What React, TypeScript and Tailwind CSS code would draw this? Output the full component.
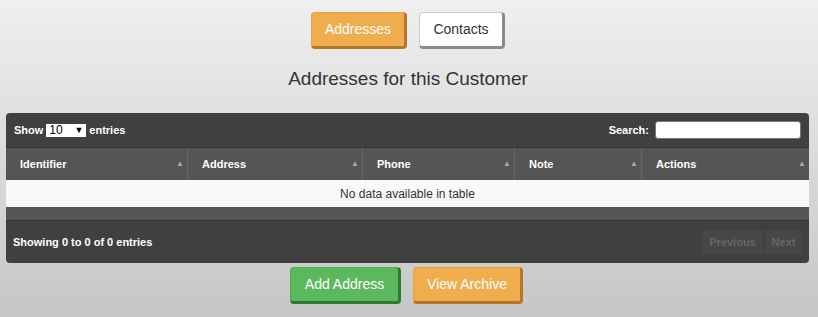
import React from "react";

const cols = [
  { label: "Identifier", w: "w-[182px]" },
  { label: "Address", w: "w-[175px]" },
  { label: "Phone", w: "w-[152px]" },
  { label: "Note", w: "w-[127px]" },
  { label: "Actions", w: "flex-1" },
];

export default function App() {
  return (
    <div
      className="w-[818px] h-[317px] bg-gradient-to-b from-[#efefef] to-[#c6c6c6] flex flex-col items-center text-[#333]"
      style={{ fontFamily: '"Liberation Sans", Arial, sans-serif' }}
    >
      <div className="flex gap-[12px] mt-[12px] mr-[2px]">
        <button className="h-[37px] w-[96px] bg-[#f0ad4e] text-white text-[14px] rounded-[4px] border border-[#eea236] border-b-[3px] border-r-[3px] border-b-[#b7772a] border-r-[#b7772a]">
          Addresses
        </button>
        <button className="h-[37px] w-[86px] bg-white text-[#333] text-[14px] rounded-[4px] border border-[#ccc] border-b-[3px] border-r-[3px] border-b-[#8a8a8a] border-r-[#8a8a8a]">
          Contacts
        </button>
      </div>
      <h2 className="text-[19px] leading-[22px] mt-[19px] mr-[2px] text-[#333]">Addresses for this Customer</h2>
      <div className="mt-[23px] w-[803px] self-start ml-[6px] rounded-[4px] overflow-hidden bg-[#404040]">
        <div className="h-[35px] flex items-center justify-between pl-[8px] pr-[8px] text-white text-[11px] font-bold border-b border-[#333]">
          <div className="flex items-center gap-[3px]">
            <span>Show</span>
            <span className="w-[40px] h-[13px] bg-white text-black font-normal text-[12px] leading-[13px] flex items-center justify-between px-[3px]">
              <span>10</span>
              <span className="text-[9px]">▼</span>
            </span>
            <span>entries</span>
          </div>
          <div className="flex items-center gap-[6px]">
            <span>Search:</span>
            <span className="w-[146px] h-[18px] bg-white rounded-[3px] border border-[#777]"></span>
          </div>
        </div>
        <div className="flex h-[32px] bg-[#555] text-white text-[11px] font-bold">
          {cols.map((c, i) => (
            <div
              key={c.label}
              className={`${c.w} flex items-center justify-between pl-[14px] pr-[3px] ${i < 4 ? "border-r border-[#666]" : ""}`}
            >
              <span>{c.label}</span>
              <span className="text-[8px] text-[#aaa]">▲</span>
            </div>
          ))}
        </div>
        <div className="h-[27px] bg-[#f9f9f9] flex items-center justify-center text-[12px] text-[#333]">
          No data available in table
        </div>
        <div className="h-[14px] bg-[#555] border-b border-[#333]"></div>
        <div className="h-[42px] flex items-center justify-between pl-[7px] pr-[7px] text-white text-[11px] font-bold">
          <span>Showing 0 to 0 of 0 entries</span>
          <div className="flex gap-[2px]">
            <span className="h-[24px] w-[61px] justify-center flex items-center bg-[#474747] text-[#666] rounded-[2px]">Previous</span>
            <span className="h-[24px] w-[37px] justify-center flex items-center bg-[#474747] text-[#666] rounded-[2px]">Next</span>
          </div>
        </div>
      </div>
      <div className="flex gap-[12px] mt-[4px] mr-[5px]">
        <button className="h-[37px] w-[111px] bg-[#5cb85c] text-white text-[14px] rounded-[4px] border border-[#4cae4c] border-b-[3px] border-r-[3px] border-b-[#2f7a2f] border-r-[#2f7a2f]">
          Add Address
        </button>
        <button className="h-[37px] w-[110px] bg-[#f0ad4e] text-white text-[14px] rounded-[4px] border border-[#eea236] border-b-[3px] border-r-[3px] border-b-[#b7772a] border-r-[#b7772a]">
          View Archive
        </button>
      </div>
    </div>
  );
}
